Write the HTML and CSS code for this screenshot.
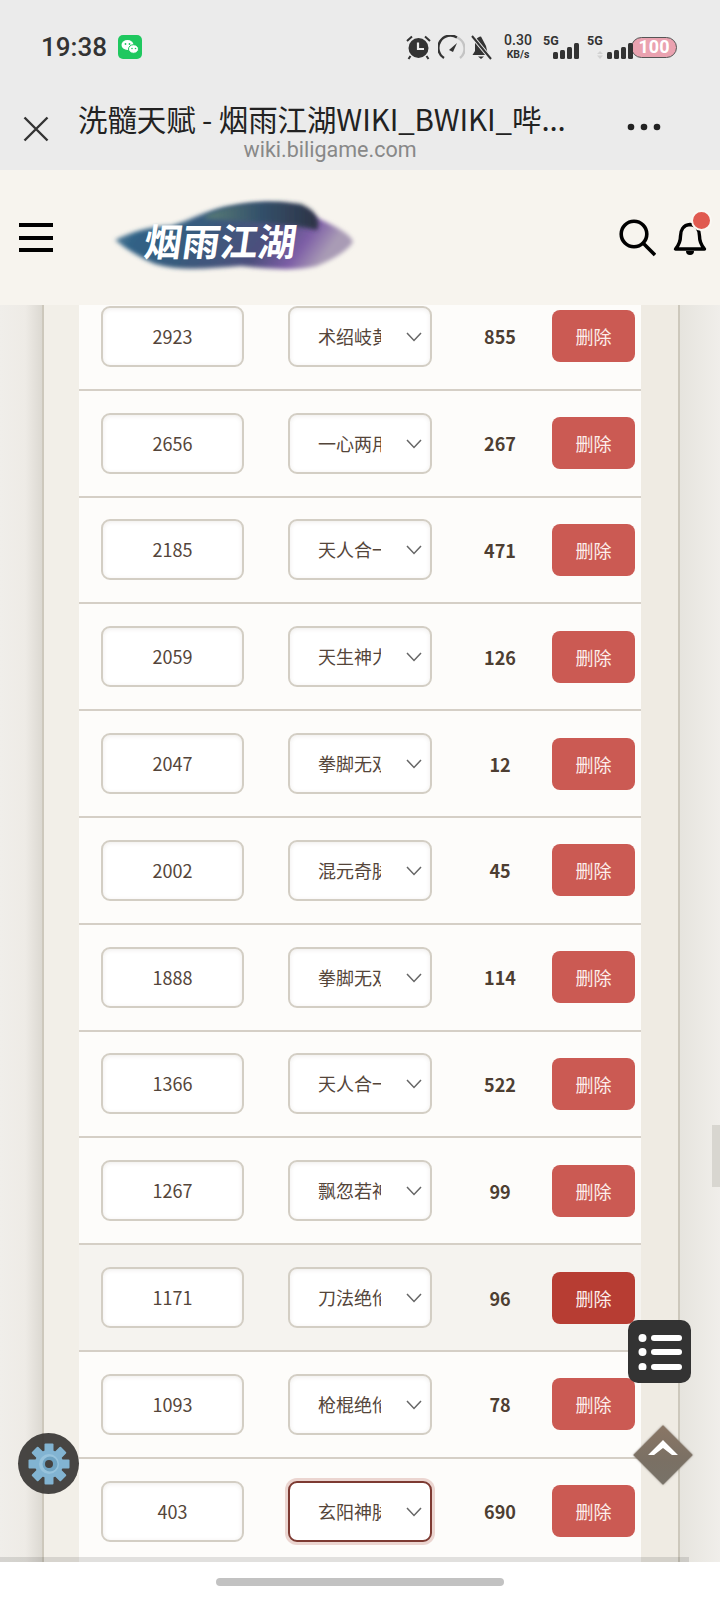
FILE: index.html
```html
<!DOCTYPE html>
<html lang="zh">
<head>
<meta charset="utf-8">
<title>洗髓天赋 - 烟雨江湖WIKI</title>
<link rel="stylesheet" href="styles.css">
</head>
<body>
<div class="phone">
  <div class="status">
    <div class="status-left">
      <span class="time">19:38</span>
      <svg class="wechat" width="24" height="24" viewBox="0 0 24 24"><rect width="24" height="24" rx="5" fill="#1fc85f"/><ellipse cx="9.5" cy="10" rx="6" ry="5" fill="#fff"/><ellipse cx="15.5" cy="14" rx="5" ry="4.3" fill="#fff" stroke="#1fc85f"/><circle cx="7.5" cy="9" r=".9" fill="#1fc85f"/><circle cx="11.5" cy="9" r=".9" fill="#1fc85f"/><circle cx="14" cy="13.5" r=".8" fill="#1fc85f"/><circle cx="17.5" cy="13.5" r=".8" fill="#1fc85f"/></svg>
    </div>
    <div class="status-right">
      <svg class="ic-alarm" width="25" height="25" viewBox="0 0 25 25"><circle cx="12.5" cy="13" r="10" fill="#333"/><path d="M1 6 6 1.5M24 6 19 1.500M4.500 21 2.500 24M20.500 21 22.500 24" stroke="#333" stroke-width="2" fill="none"/><path d="M12 7.500V14H18" stroke="#ebebeb" stroke-width="2.200" fill="none"/></svg>
      <svg class="ic-speed" width="27" height="25" viewBox="0 0 27 25"><path d="M6 23A12 12 0 0 1 19 2.500" fill="none" stroke="#333" stroke-width="2.400"/><path d="M19 2.500A12 12 0 0 1 22 23" fill="none" stroke="#c4c4c4" stroke-width="2.400"/><path d="M11 15 19 8 15 17Z" fill="#333"/></svg>
      <svg class="ic-mute" width="21" height="25" viewBox="0 0 21 25"><path d="M10 1.500C5.500 2 4 6 4 10V16L1.500 20H17L15 11Z" fill="#333"/><path d="M7 21.500H13L10 24Z" fill="#333"/><path d="M1 1 20 24" stroke="#ebebeb" stroke-width="4"/><path d="M1 1 20 24" stroke="#333" stroke-width="2"/></svg>
      <div class="net"><span class="net-val">0.30</span><span class="net-unit">KB/s</span></div>
      <div class="signal">
        <span class="g5">5G</span>
        <svg class="bars" width="27" height="16" viewBox="0 0 27 16"><rect y="9" width="5" height="7" rx="1.500" fill="#333"/><rect x="7" y="7" width="5" height="9" rx="1.500" fill="#333"/><rect x="14" y="4" width="5" height="12" rx="1.500" fill="#333"/><rect x="21" width="5" height="16" rx="1.500" fill="#333"/></svg>
      </div>
      <div class="signal signal-b">
        <span class="g5">5G</span>
        <svg class="bars" width="37" height="16" viewBox="0 0 37 16"><path d="M3 8 6 11H0ZM3 16 6 12.500H0Z" fill="#d2d2d2"/><rect x="10" y="9" width="5" height="7" rx="1.500" fill="#333"/><rect x="17" y="7" width="5" height="9" rx="1.500" fill="#333"/><rect x="24" y="4" width="5" height="12" rx="1.500" fill="#333"/><rect x="31" width="5" height="16" rx="1.500" fill="#333"/></svg>
      </div>
      <div class="battery">100</div>
    </div>
  </div>

  <div class="titlebar">
    <svg class="close" width="26" height="26" viewBox="0 0 26 26"><path d="M1.500 1.500 24.500 24.500M24.500 1.500 1.500 24.500" stroke="#333" stroke-width="2.400"/></svg>
    <div class="title-text">
      <div class="title-main">洗髓天赋 - 烟雨江湖WIKI_BWIKI_哔...</div>
      <div class="title-sub">wiki.biligame.com</div>
    </div>
    <svg class="more" width="34" height="8" viewBox="0 0 34 8"><circle cx="4" cy="4" r="3.300" fill="#222"/><circle cx="17" cy="4" r="3.300" fill="#222"/><circle cx="30" cy="4" r="3.300" fill="#222"/></svg>
  </div>

  <header class="wikihead">
    <div class="burger"><span></span><span></span><span></span></div>
    <div class="logo">
      <svg width="246" height="84" viewBox="0 0 246 84">
        <defs>
          <linearGradient id="ink" x1="0" x2="1" y1="0" y2="0.200">
            <stop offset="0" stop-color="#8fa6b4"/>
            <stop offset=".18" stop-color="#2f6286"/>
            <stop offset=".45" stop-color="#3a5a7c"/>
            <stop offset=".72" stop-color="#4d4f7d"/>
            <stop offset=".88" stop-color="#7d5ea6"/>
            <stop offset="1" stop-color="#a99bb5"/>
          </linearGradient>
          <linearGradient id="ink2" x1="0" x2="1" y1="0" y2="0">
            <stop offset="0" stop-color="#5b7f77"/>
            <stop offset=".5" stop-color="#33506a"/>
            <stop offset="1" stop-color="#2d3346"/>
          </linearGradient>
          <filter id="soft" x="-10%" y="-20%" width="120%" height="140%"><feGaussianBlur stdDeviation="2.200"/></filter>
        </defs>
        <path d="M4 44C20 36 40 30 60 30 80 24 100 12 120 10 150 4 190 6 206 22 224 30 240 38 242 46 236 56 220 64 206 70 180 76 150 72 130 70 100 72 70 76 44 68 30 62 16 54 4 44Z" fill="url(#ink)" filter="url(#soft)"/>
        <path d="M92 22C110 10 150 2 190 8 204 14 210 24 206 34 170 26 130 26 92 22Z" fill="url(#ink2)" filter="url(#soft)"/>
        <text class="logo-text" x="30" y="60" transform="skewX(-8) translate(10 0)">烟雨江湖</text>
      </svg>
    </div>
    <div class="head-actions">
      <svg class="search" width="38" height="38" viewBox="0 0 38 38"><circle cx="16" cy="15" r="12.800" fill="none" stroke="#000" stroke-width="3.600"/><path d="M25.500 24.500 37 36" stroke="#000" stroke-width="3.600"/></svg>
      <div class="bell">
        <svg width="34" height="36" viewBox="0 0 34 36"><path d="M17 3.500C10 4 7.500 9.500 7.500 15 7.500 20 6 24 2.500 28H31.500C28 24 26.500 20 26.500 15 26.500 9.500 24 4 17 3.500Z" fill="none" stroke="#000" stroke-width="3.400" stroke-linejoin="round"/><path d="M13 30H21A4 4 0 0 1 13 30Z" fill="#000"/></svg>
        <span class="dot"></span>
      </div>
    </div>
  </header>

  <main class="content">
    <div class="gutter-left"></div>
    <div class="band-left"></div>
    <div class="table">
      <div class="row"><div class="field">2923</div><div class="pick"><span class="pick-text">术绍岐黄</span><svg class="chev" width="16" height="10" viewBox="0 0 16 10"><path d="M1 1 8 8.500 15 1" fill="none" stroke="#666" stroke-width="1.500"/></svg></div><div class="num">855</div><div class="del">删除</div></div>
      <div class="row"><div class="field">2656</div><div class="pick"><span class="pick-text">一心两用</span><svg class="chev" width="16" height="10" viewBox="0 0 16 10"><path d="M1 1 8 8.500 15 1" fill="none" stroke="#666" stroke-width="1.500"/></svg></div><div class="num">267</div><div class="del">删除</div></div>
      <div class="row"><div class="field">2185</div><div class="pick"><span class="pick-text">天人合一</span><svg class="chev" width="16" height="10" viewBox="0 0 16 10"><path d="M1 1 8 8.500 15 1" fill="none" stroke="#666" stroke-width="1.500"/></svg></div><div class="num">471</div><div class="del">删除</div></div>
      <div class="row"><div class="field">2059</div><div class="pick"><span class="pick-text">天生神力</span><svg class="chev" width="16" height="10" viewBox="0 0 16 10"><path d="M1 1 8 8.500 15 1" fill="none" stroke="#666" stroke-width="1.500"/></svg></div><div class="num">126</div><div class="del">删除</div></div>
      <div class="row"><div class="field">2047</div><div class="pick"><span class="pick-text">拳脚无双</span><svg class="chev" width="16" height="10" viewBox="0 0 16 10"><path d="M1 1 8 8.500 15 1" fill="none" stroke="#666" stroke-width="1.500"/></svg></div><div class="num">12</div><div class="del">删除</div></div>
      <div class="row"><div class="field">2002</div><div class="pick"><span class="pick-text">混元奇脉</span><svg class="chev" width="16" height="10" viewBox="0 0 16 10"><path d="M1 1 8 8.500 15 1" fill="none" stroke="#666" stroke-width="1.500"/></svg></div><div class="num">45</div><div class="del">删除</div></div>
      <div class="row"><div class="field">1888</div><div class="pick"><span class="pick-text">拳脚无双</span><svg class="chev" width="16" height="10" viewBox="0 0 16 10"><path d="M1 1 8 8.500 15 1" fill="none" stroke="#666" stroke-width="1.500"/></svg></div><div class="num">114</div><div class="del">删除</div></div>
      <div class="row"><div class="field">1366</div><div class="pick"><span class="pick-text">天人合一</span><svg class="chev" width="16" height="10" viewBox="0 0 16 10"><path d="M1 1 8 8.500 15 1" fill="none" stroke="#666" stroke-width="1.500"/></svg></div><div class="num">522</div><div class="del">删除</div></div>
      <div class="row"><div class="field">1267</div><div class="pick"><span class="pick-text">飘忽若神</span><svg class="chev" width="16" height="10" viewBox="0 0 16 10"><path d="M1 1 8 8.500 15 1" fill="none" stroke="#666" stroke-width="1.500"/></svg></div><div class="num">99</div><div class="del">删除</div></div>
      <div class="row row-hover"><div class="field">1171</div><div class="pick"><span class="pick-text">刀法绝伦</span><svg class="chev" width="16" height="10" viewBox="0 0 16 10"><path d="M1 1 8 8.500 15 1" fill="none" stroke="#666" stroke-width="1.500"/></svg></div><div class="num">96</div><div class="del del-hover">删除</div></div>
      <div class="row"><div class="field">1093</div><div class="pick"><span class="pick-text">枪棍绝伦</span><svg class="chev" width="16" height="10" viewBox="0 0 16 10"><path d="M1 1 8 8.500 15 1" fill="none" stroke="#666" stroke-width="1.500"/></svg></div><div class="num">78</div><div class="del">删除</div></div>
      <div class="row"><div class="field">403</div><div class="pick pick-focus"><span class="pick-text">玄阳神脉</span><svg class="chev" width="16" height="10" viewBox="0 0 16 10"><path d="M1 1 8 8.500 15 1" fill="none" stroke="#666" stroke-width="1.500"/></svg></div><div class="num">690</div><div class="del">删除</div></div>
    </div>
    <div class="band-right"></div>
    <div class="gutter-right"></div>
    <div class="scroll-thumb"></div>
    <div class="hscroll"></div>
  </main>

  <footer class="homebar"><span class="home-pill"></span></footer>

  <div class="fab-list">
    <svg width="44" height="36" viewBox="0 0 44 36"><circle cx="4.500" cy="4" r="4" fill="#fff"/><circle cx="4.500" cy="18" r="4" fill="#fff"/><circle cx="4.500" cy="33" r="4" fill="#fff"/><rect x="13" y="1" width="31" height="6" rx="3" fill="#fff"/><rect x="13" y="15" width="31" height="6" rx="3" fill="#fff"/><rect x="13" y="30" width="31" height="6" rx="3" fill="#fff"/></svg>
  </div>
  <div class="fab-top">
    <svg width="30" height="18" viewBox="0 0 30 18"><path d="M15 0 30 15 24 15 15 8 6 15 0 15Z" fill="#fff"/></svg>
  </div>
  <div class="fab-gear">
    <svg width="42" height="42" viewBox="0 0 42 42">
      <g fill="#82b4d2">
        <circle cx="21" cy="21" r="14"/>
        <rect x="16.500" y="0.500" width="9" height="41" rx="1"/>
        <rect x="16.500" y="0.500" width="9" height="41" rx="1" transform="rotate(45 21 21)"/>
        <rect x="16.500" y="0.500" width="9" height="41" rx="1" transform="rotate(90 21 21)"/>
        <rect x="16.500" y="0.500" width="9" height="41" rx="1" transform="rotate(135 21 21)"/>
      </g>
      <circle cx="21" cy="21" r="10" fill="#97c3dc"/>
      <circle cx="22" cy="21" r="7.500" fill="#6fa3c2"/>
      <circle cx="21" cy="21" r="4" fill="#444240"/>
    </svg>
  </div>
</div>
</body>
</html>
```

FILE: styles.css
```css
* { box-sizing: border-box; }
html, body { margin: 0; padding: 0; }
body { width: 720px; height: 1600px; overflow: hidden; background: #fff; font-family: "Noto Sans CJK SC", "Noto Sans", sans-serif; }

.phone { position: relative; width: 720px; height: 1600px; display: flex; flex-direction: column; overflow: hidden; }

/* status bar */
.status { height: 94px; flex: none; background: #ebebeb; display: flex; justify-content: space-between; align-items: center; padding: 0 43px 0 41px; color: #333; }
.status-left { display: flex; align-items: center; gap: 11px; }
.time { font: 500 26px/30px Roboto, sans-serif; color: #333; }
.wechat { display: block; }
.status-right { display: flex; align-items: center; }
.status-right svg { display: block; }
.ic-speed { margin-left: 7px; }
.ic-mute { margin-left: 6px; }
.net { margin-left: 12px; width: 28px; display: flex; flex-direction: column; align-items: center; font-family: Roboto, sans-serif; color: #333; }
.net-val { font: 500 14px/14px Roboto, sans-serif; }
.net-unit { font: 700 10.500px/12px Roboto, sans-serif; margin-top: 2px; }
.signal { position: relative; width: 37px; height: 24px; margin-left: 11px; }
.signal-b { width: 37px; margin-left: 7px; }
.g5 { position: absolute; left: 0; top: 0; font: 700 12.500px/12px Roboto, sans-serif; color: #333; }
.bars { position: absolute; left: 10px; bottom: 0; }
.battery { margin-left: 7px; width: 46px; height: 21px; border: 1.500px solid #555; border-radius: 11px; background: #eaa2b0; color: #fff; font: 700 18px/18px Roboto, sans-serif; text-align: center; }

/* title bar */
.titlebar { height: 76px; flex: none; background: #ebebeb; display: flex; align-items: flex-start; padding-left: 23px; position: relative; }
.close { margin-top: 22px; flex: none; display: block; }
.title-text { width: 520px; margin-left: 29px; margin-top: 4px; }
.title-main { font: 400 29.500px/40px "Noto Sans CJK SC", sans-serif; color: #222; white-space: nowrap; letter-spacing: -.1px; }
.title-sub { font: 400 21.500px/28px Roboto, sans-serif; color: #888; width: 504px; text-align: center; margin-top: -2px; }
.more { margin-left: 29px; margin-top: 29px; flex: none; display: block; }

/* site header */
.wikihead { height: 135px; flex: none; background: #f7f4ee; display: flex; align-items: center; padding: 0 13px 0 19px; position: relative; }
.burger { width: 34px; display: flex; flex-direction: column; gap: 8.500px; margin-top: 0; }
.burger span { display: block; height: 4px; background: #000; }
.logo { margin-left: 58px; margin-top: 0; width: 246px; height: 84px; }
.logo svg { display: block; }
.logo-text { font: 700 38px "Noto Sans CJK SC", sans-serif; fill: #fff; }
.head-actions { margin-left: auto; display: flex; align-items: center; gap: 17px; }
.search { display: block; }
.bell { position: relative; width: 34px; height: 36px; margin-top: 2px; }
.bell svg { display: block; }
.dot { position: absolute; right: -5px; top: -11px; width: 21px; height: 21px; border-radius: 50%; background: #e05a50; border: 2px solid #fbf8f3; }

/* content */
.content { flex: 1; position: relative; display: flex; overflow: hidden; min-height: 0; }
.gutter-left { width: 42px; flex: none; background: linear-gradient(90deg, #f0eeea 0%, #eeebe6 60%, #dcd9d2 100%); }
.band-left { width: 37px; flex: none; background: #f2efe8; border-left: 2px solid #cdc8bc; }
.table { width: 562px; flex: none; margin-top: -21px; }
.row { height: 106.800px; background: #fdfcfa; border-bottom: 2px solid #d5cfc6; display: grid; grid-template-columns: 143px 144px 1fr 83px; align-items: center; padding: 0 6px 0 22px; }
.row-hover { background: #f5f3ef; }
.field, .pick { height: 61px; border: 2px solid #d3cec4; border-radius: 9px; background: #fff; box-shadow: inset 0 1px 4px rgba(90, 70, 50, .1); font-size: 18px; line-height: 57px; color: #54453a; }
.field { text-align: center; }
.pick { position: relative; margin-left: 44px; width: 144px; grid-column: 2; padding-left: 28px; }
.row { grid-template-columns: 143px 188px 1fr 83px; }
.pick-text { display: block; width: 63px; height: 57px; overflow: hidden; white-space: nowrap; }
.chev { position: absolute; right: 8px; top: 24px; display: block; }
.pick-focus { border-color: #7d3a32; box-shadow: 0 0 0 3px rgba(190, 110, 100, .28); }
.num { font-size: 18px; font-weight: 700; color: #4d3e32; text-align: center; padding-left: 16px; }
.del { height: 52px; border-radius: 8px; background: #cb5a53; color: #fdeeea; font-size: 18px; line-height: 52px; text-align: center; }
.del-hover { background: #b73d33; }
.band-right { width: 37px; flex: none; background: #efebe3; }
.gutter-right { flex: 1; background: linear-gradient(90deg, #e6e4de 0%, #ebe9e4 50%, #f0eeea 100%); border-left: 2px solid #cdc8bc; }
.scroll-thumb { position: absolute; right: 0; top: 820px; width: 8px; height: 62px; background: #d8d6d0; }
.hscroll { position: absolute; left: 0; bottom: 0; width: 689px; height: 5px; background: rgba(0, 0, 0, .11); }

.homebar { height: 38px; flex: none; background: #fff; display: flex; justify-content: center; padding-top: 16px; }
.home-pill { width: 288px; height: 8px; border-radius: 4px; background: #c2c2c2; margin-left: -1px; }

/* floating controls */
.fab-list { position: absolute; left: 628px; top: 1320px; width: 63px; height: 63px; border-radius: 10px; background: #333; display: flex; align-items: center; justify-content: center; }
.fab-list svg { display: block; }
.fab-top { position: absolute; left: 634px; top: 1426px; width: 58px; height: 58px; display: flex; align-items: center; justify-content: center; }
.fab-top::before { content: ""; position: absolute; left: 8px; top: 8px; width: 42px; height: 42px; transform: rotate(45deg); background: linear-gradient(135deg, #8a7665, #7a7064 60%, #787268); box-shadow: 0 0 2px rgba(90, 80, 70, .8); }
.fab-top svg { position: relative; display: block; margin-top: -12px; }
.fab-gear { position: absolute; left: 18px; top: 1433px; width: 61px; height: 61px; border-radius: 50%; background: rgba(58, 56, 54, .93); display: flex; align-items: center; justify-content: center; }
.fab-gear svg { display: block; }
```
